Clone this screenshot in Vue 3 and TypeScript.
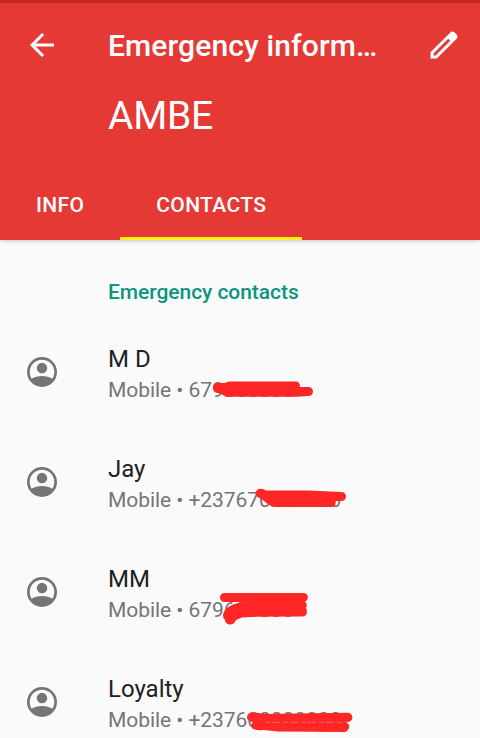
<script setup lang="ts">
interface Contact {
  name: string
  number: string
  scribble: string
  gap?: string
}

const contacts: Contact[] = [
  {
    name: 'M D',
    number: '679000000',
    scribble:
      'M110 50.800 L117 51 Q119 49.500 122 49.500 H188 Q192 49.500 192 55 H200.500 A4.500 4.500 0 0 1 200.500 64 L188 64.700 H118 L112 61.500 Q105 61 105 56 Q105 51 110 50.800 Z',
  },
  {
    name: 'Jay',
    number: '+237670000000',
    scribble:
      'M152.500 46.700 Q156 46.700 158 48.500 L200 48.500 L233.500 50 A4.500 4.500 0 0 1 233.500 59 L228 59 L227 64 L223 65 H169 Q164 65 162 63.500 Q157 60 152 56 A4.650 4.650 0 0 1 152.500 46.700 Z',
  },
  {
    name: 'MM',
    number: '679600000',
    scribble:
      'M116.500 41 H195.500 A4.500 4.500 0 0 1 197 49.700 Q200 52 198 55.500 Q201 64 194 64.500 L147 64.800 L134 65.500 L128 68 Q126 73 121 72.500 Q117 71 117 68 Q113 64 117 58 Q121 53 130 51 Q139 49 148 50 H116.500 A4.500 4.500 0 0 1 116.500 41 Z',
  },
  {
    name: 'Loyalty',
    number: '+237600000000',
    scribble:
      'M144 50.500 Q150 50.500 156 52 L239.500 50.700 A4.500 4.500 0 0 1 240 60 L238 60.500 Q242 62 241 66 Q239 71 234 70 L170 69.500 L156 68 Q144 69 143 64 Q143 62 145 60.300 Q139 59 139 55.500 Q139 51 144 50.500 Z',
    gap: 'M157 60.300 H235',
  },
]
</script>

<template>
  <div class="screen">
    <header class="header">
      <div class="toolbar">
        <svg class="icon" viewBox="0 0 24 24">
          <path d="M20 11H7.830l5.590-5.590L12 4l-8 8 8 8 1.410-1.410L7.830 13H20v-2z" />
        </svg>
        <h1 class="title">Emergency inform…</h1>
        <svg class="icon" viewBox="0 0 24 24">
          <path
            d="M20.410 4.940l-1.350-1.350c-.78-.78-2.050-.78-2.830 0L3 16.820V21h4.180L20.410 7.770c.79-.78.79-2.050 0-2.830zM6.410 19.060L5 19v-1.360l9.820-9.820 1.410 1.410-9.820 9.830z"
          />
        </svg>
      </div>
      <div class="owner">AMBE</div>
      <nav class="tabs">
        <div class="tab">INFO</div>
        <div class="tab active">CONTACTS</div>
      </nav>
    </header>
    <main>
      <h2 class="section">Emergency contacts</h2>
      <div v-for="contact in contacts" :key="contact.name" class="contact">
        <svg class="avatar" viewBox="0 0 24 24">
          <circle class="ring" cx="12" cy="12" r="9.100" />
          <circle cx="12" cy="9.400" r="3.500" />
          <path d="M4.300 16.800C7 15.200 9.400 14.600 12 14.600s5 .6 7.700 2.200A9 9 0 0 1 4.300 16.800z" />
        </svg>
        <div class="details">
          <div class="name">{{ contact.name }}</div>
          <div class="phone">Mobile • {{ contact.number }}</div>
          <svg class="scribble" viewBox="0 0 300 80">
            <path :d="contact.scribble" />
            <path v-if="contact.gap" class="gap" :d="contact.gap" />
          </svg>
        </div>
      </div>
    </main>
  </div>
</template>

<style>
body {
  overflow: hidden;
}
</style>

<style scoped>
.screen {
  width: 480px;
  height: 738px;
  overflow: hidden;
  background: #fafafa;
  font-family: Roboto, sans-serif;
}
.header {
  box-sizing: border-box;
  height: 240px;
  border-top: 3px solid #c62828;
  background: #e53935;
  color: #fff;
  box-shadow: 0 1px 4px rgba(0, 0, 0, 0.22);
}
.toolbar {
  display: flex;
  align-items: center;
  height: 84px;
  padding: 0 18px 0 24px;
}
.icon {
  width: 36px;
  height: 36px;
  flex: none;
  fill: #fff;
}
.title {
  width: 286px;
  margin: 2px 32px 0 48px;
  white-space: nowrap;
  font-size: 30px;
  font-weight: 500;
  letter-spacing: 0.14px;
  line-height: 40px;
}
.owner {
  height: 83px;
  padding-left: 108px;
  font-size: 39px;
  letter-spacing: -0.3px;
  line-height: 59px;
}
.tabs {
  display: flex;
  height: 70px;
}
.tab {
  box-sizing: border-box;
  height: 70px;
  padding: 0 36px;
  font-size: 21px;
  font-weight: 500;
  letter-spacing: 0.35px;
  line-height: 70px;
}
.active {
  border-bottom: 3px solid #fff01a;
}
.section {
  margin: 37px 0 25px 108px;
  color: #0c957f;
  font-size: 21px;
  font-weight: 500;
  letter-spacing: -0.05px;
  line-height: 30px;
}
.contact {
  display: flex;
  height: 110px;
}
.avatar {
  width: 36px;
  height: 36px;
  margin: 22px 48px 0 24px;
  fill: #757575;
}
.ring {
  fill: none;
  stroke: #757575;
  stroke-width: 1.8;
}
.details {
  position: relative;
  padding-top: 10px;
  white-space: nowrap;
}
.name {
  color: #212121;
  font-size: 24px;
  line-height: 34px;
}
.phone {
  color: #757575;
  font-size: 21px;
  letter-spacing: -0.06px;
  line-height: 28px;
}
.scribble {
  position: absolute;
  top: 0;
  left: 0;
  width: 300px;
  height: 80px;
  fill: #ff2626;
}
.gap {
  stroke: #ff8a8a;
  stroke-width: 0.6;
  stroke-dasharray: 5 2 8 3;
}
</style>
